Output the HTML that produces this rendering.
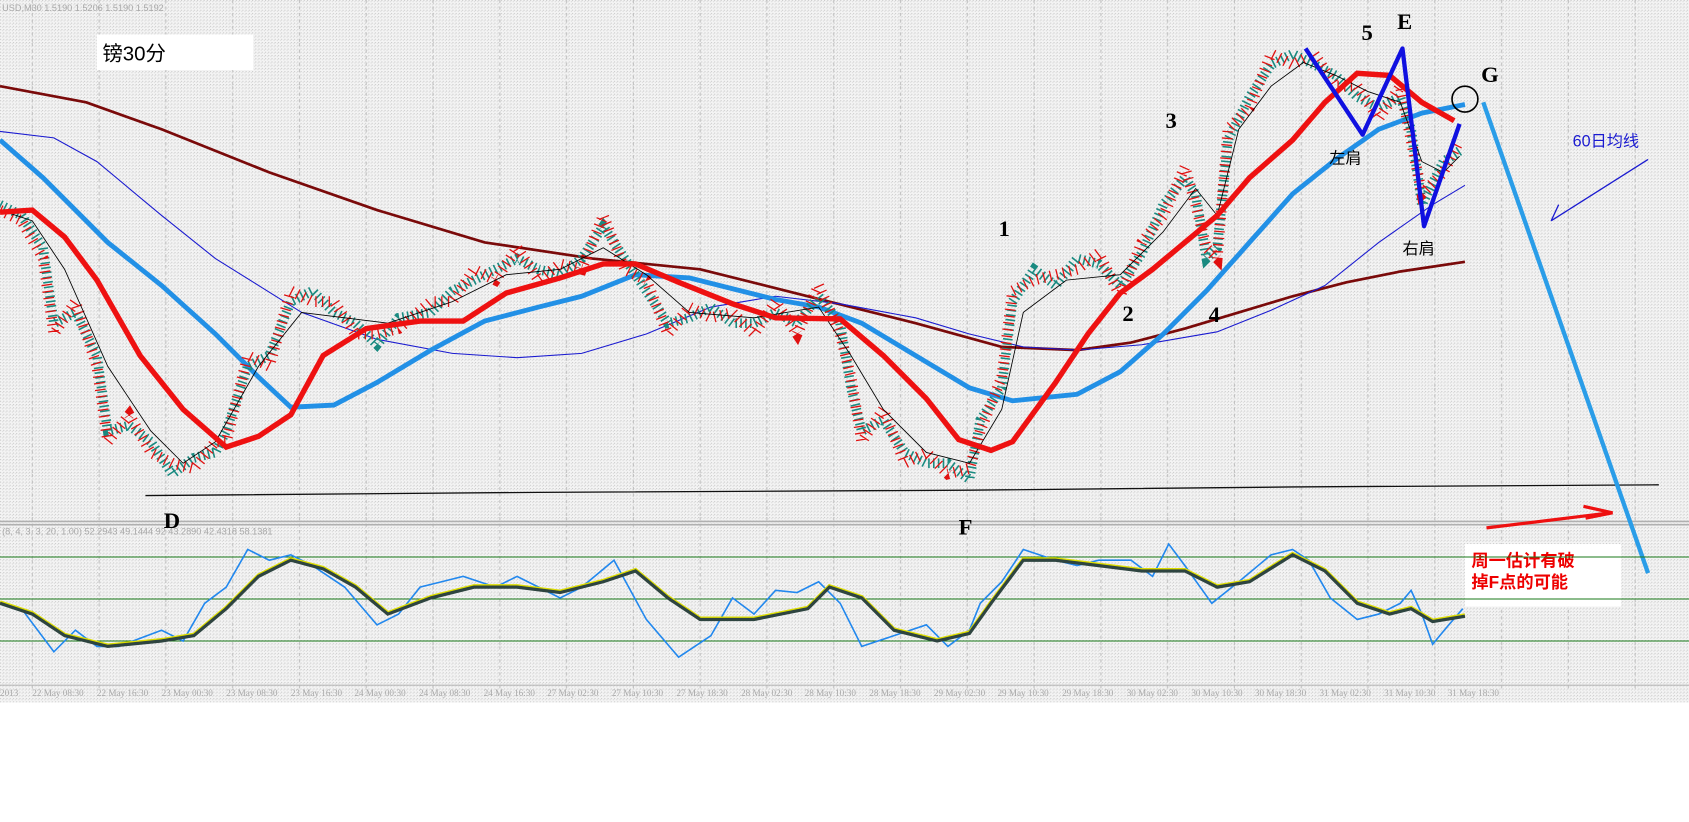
<!DOCTYPE html>
<html><head><meta charset="utf-8"><style>
html,body{margin:0;padding:0;background:#fff;width:1689px;height:822px;overflow:hidden}
svg{display:block}
text{font-family:"Liberation Serif","Noto Serif CJK SC",serif}
.cj{font-family:"Liberation Sans","Noto Sans CJK SC",sans-serif}
.ax{font-family:"Liberation Sans",sans-serif;font-size:8.5px;fill:#a8a8a8}
</style></head><body>
<svg width="1689" height="822" viewBox="0 0 1568 763" preserveAspectRatio="none" xmlns="http://www.w3.org/2000/svg">
<defs>
<pattern id="dots" width="3" height="3" patternUnits="userSpaceOnUse"><rect width="3" height="3" fill="#f4f4f4"/><rect width="1" height="1" fill="#c8c8c8"/><rect x="2" y="1" width="1" height="1" fill="#d8d8d8"/></pattern>
<pattern id="grid" width="62" height="40" patternUnits="userSpaceOnUse"><line x1="30" y1="0" x2="30" y2="40" stroke="#c0c0c0" stroke-dasharray="3,3"/></pattern>
</defs>
<rect x="0" y="0" width="1568" height="652" fill="url(#dots)"/>
<rect x="0" y="0" width="1568" height="640" fill="url(#grid)"/>
<line x1="0" y1="484" x2="1568" y2="484" stroke="#b0b0b0" stroke-width="1.5"/>
<line x1="0" y1="487" x2="1568" y2="487" stroke="#b0b0b0" stroke-width="1.5"/>
<line x1="0" y1="636" x2="1568" y2="636" stroke="#b8b8b8"/>
<text x="2" y="10" class="ax" font-size="8px">USD,M30  1.5190 1.5206 1.5190 1.5192</text>
<rect x="90" y="32" width="145" height="33" fill="#fff"/>
<text x="95" y="56" font-size="19" class="cj" fill="#000">镑30分</text>

<polyline fill="none" stroke="#7a0a0a" stroke-width="2.5" points="0,80 80,95 150,120 250,160 350,195 450,225 550,240 650,250 750,275 850,300 930,322 1000,325 1050,318 1100,305 1150,290 1200,275 1250,262 1300,252 1360,243"/>
<polyline fill="none" stroke="#1a1ad0" stroke-width="1" points="0,122 50,128 90,150 150,200 200,240 280,290 350,315 420,328 480,332 540,328 600,310 660,285 720,275 780,282 850,295 900,310 950,322 1000,325 1060,320 1130,308 1180,288 1230,265 1280,225 1330,190 1360,172"/>
<polyline fill="none" stroke="#2290e6" stroke-width="4.5" points="0,130 40,165 100,225 150,265 200,310 240,350 270,378 310,376 350,355 400,325 450,298 500,285 540,275 590,255 640,258 680,268 720,278 760,285 800,300 850,330 900,360 940,372 1000,366 1040,345 1080,310 1120,270 1160,225 1200,180 1240,148 1280,120 1320,105 1360,97"/>
<polyline fill="none" stroke="#1a8a80" stroke-width="9" stroke-dasharray="1.5,3" points="0,190 20,200 40,230 50,300 70,290 90,330 100,400 120,395 140,410 160,440 180,425 200,420 210,400 230,340 250,330 270,280 290,270 310,290 330,300 350,320 370,295 400,290 420,270 440,260 460,250 480,240 500,250 520,255 540,240 560,210 580,240 600,270 620,300 640,295 660,285 680,300 700,300 720,290 740,300 760,275 780,300 790,360 800,400 820,390 840,420 860,430 880,430 900,445 910,390 930,360 940,280 960,250 980,265 1000,240 1020,245 1040,265 1060,235 1080,190 1100,165 1110,180 1120,240 1130,230 1140,130 1160,90 1180,60 1200,50 1220,60 1240,70 1260,90 1280,100 1300,90 1310,120 1320,190 1340,150 1355,140"/>
<polyline fill="none" stroke="#e01010" stroke-width="10" stroke-dasharray="1.2,5" points="0,195 20,205 40,240 50,310 70,280 90,340 100,410 120,385 140,420 160,430 180,435 200,410 210,410 230,330 250,340 270,270 290,280 310,280 330,310 350,310 370,305 400,280 420,280 440,250 460,260 480,230 500,260 520,245 540,250 560,200 580,250 600,260 620,310 640,285 660,295 680,290 700,310 720,280 740,310 760,265 780,310 790,350 800,410 820,380 840,430 860,420 880,440 900,435 910,400 930,350 940,270 960,260 980,255 1000,250 1020,235 1040,275 1060,225 1080,200 1100,155 1110,190 1120,230 1130,240 1140,120 1160,100 1180,50 1200,60 1220,50 1240,80 1260,80 1280,110 1300,80 1310,130 1320,180 1340,160 1355,130"/>
<polyline fill="none" stroke="#000" stroke-width="0.8" points="0,195 30,205 60,250 100,340 140,400 170,430 200,410 240,340 280,290 320,295 360,300 420,280 470,255 520,250 560,230 600,255 640,290 700,295 760,285 790,330 820,380 860,420 900,430 930,380 950,290 990,260 1040,255 1080,215 1110,175 1130,200 1150,120 1180,80 1210,58 1240,70 1270,85 1300,95 1320,150 1340,160 1355,145"/>
<polyline fill="none" stroke="#ee1111" stroke-width="5" points="0,197 30,195 60,220 90,260 130,330 170,380 210,415 240,405 270,385 300,330 340,305 390,298 430,298 470,272 520,258 560,245 590,245 630,262 680,282 720,295 780,296 820,330 860,370 890,408 920,418 940,410 980,355 1010,310 1040,272 1070,250 1100,225 1130,200 1160,165 1200,130 1230,95 1260,68 1290,70 1320,95 1350,112"/>
<polyline fill="none" stroke="#111" stroke-width="1.2" points="135,460 500,457 900,455 1200,452 1540,450"/>

<polyline fill="none" stroke="#1010e0" stroke-width="4" stroke-linejoin="round" points="1212,45 1265,125 1302,45 1322,210 1355,115"/>
<circle cx="1360" cy="92" r="12" fill="none" stroke="#000" stroke-width="1.5"/>
<line x1="1377" y1="95" x2="1530" y2="532" stroke="#2a9de8" stroke-width="4"/>
<line x1="1380" y1="490" x2="1495" y2="476" stroke="#ee1010" stroke-width="3"/>
<polyline fill="none" stroke="#ee1010" stroke-width="3" points="1470,470 1497,476 1472,481"/>
<line x1="1530" y1="148" x2="1440" y2="205" stroke="#1a1ad0" stroke-width="1.2"/>
<line x1="1440" y1="205" x2="1447" y2="190" stroke="#1a1ad0" stroke-width="1.2"/>

<g font-size="21" fill="#000" font-weight="bold">
<text x="927" y="219">1</text><text x="1042" y="298">2</text><text x="1082" y="119">3</text>
<text x="1122" y="299">4</text><text x="1264" y="37">5</text><text x="1297" y="27">E</text>
<text x="1375" y="76">G</text><text x="152" y="490">D</text><text x="890" y="496">F</text>
</g>
<text x="1234" y="152" font-size="15" class="cj">左肩</text>
<text x="1302" y="236" font-size="15" class="cj">右肩</text>
<text x="1460" y="136" font-size="15" class="cj" fill="#1a1ad0">60日均线</text>
<rect x="1360" y="505" width="145" height="58" fill="#fff"/>
<text x="1366" y="526" font-size="16" class="cj" fill="#e00" font-weight="bold">周一估计有破</text>
<text x="1366" y="546" font-size="16" class="cj" fill="#e00" font-weight="bold">掉F点的可能</text>

<text x="2" y="496" class="ax">(8, 4, 3, 3, 20, 1.00) 52.2943 49.1444    92 43.2890 42.4318 58.1381</text>
<g stroke="#1a7a1a" stroke-width="1"><line x1="0" y1="517" x2="1568" y2="517"/><line x1="0" y1="556" x2="1568" y2="556"/><line x1="0" y1="595" x2="1568" y2="595"/></g>
<polyline fill="none" stroke="#2288ee" stroke-width="1.5" points="0,560 20,565 50,605 70,585 90,600 110,600 150,585 170,595 190,560 210,545 230,510 250,520 270,515 290,525 320,545 350,580 370,570 390,545 410,540 430,535 460,545 480,535 500,545 520,555 540,545 570,520 600,575 630,610 660,590 680,555 700,570 720,548 740,550 760,540 780,560 800,600 830,590 860,580 880,600 900,585 910,560 930,540 950,510 980,520 1000,525 1020,520 1050,520 1070,535 1085,505 1100,525 1125,560 1150,540 1180,515 1200,510 1215,520 1235,555 1260,575 1280,570 1300,560 1310,548 1320,570 1330,598 1345,580 1358,565"/>
<polyline fill="none" stroke="#dddd00" stroke-width="3.5" points="0,559 30,569 60,589 100,599 150,594 180,589 210,564 240,534 270,519 300,527 330,544 360,569 400,554 440,544 480,544 520,549 560,539 590,529 620,554 650,574 700,574 750,564 770,544 800,554 830,584 870,594 900,587 920,559 950,519 980,519 1020,524 1060,529 1100,529 1130,544 1160,539 1200,514 1230,529 1260,559 1290,569 1310,564 1330,576 1360,571"/>
<polyline fill="none" stroke="#2e4440" stroke-width="3" points="0,560 30,570 60,590 100,600 150,595 180,590 210,565 240,535 270,520 300,528 330,545 360,570 400,555 440,545 480,545 520,550 560,540 590,530 620,555 650,575 700,575 750,565 770,545 800,555 830,585 870,595 900,588 920,560 950,520 980,520 1020,525 1060,530 1100,530 1130,545 1160,540 1200,515 1230,530 1260,560 1290,570 1310,565 1330,577 1360,572"/>

<g class="ax">
<text x="0" y="646">2013</text>
<text x="30" y="646">22 May 08:30</text><text x="90" y="646">22 May 16:30</text><text x="150" y="646">23 May 00:30</text>
<text x="210" y="646">23 May 08:30</text><text x="270" y="646">23 May 16:30</text><text x="329" y="646">24 May 00:30</text>
<text x="389" y="646">24 May 08:30</text><text x="449" y="646">24 May 16:30</text><text x="508" y="646">27 May 02:30</text>
<text x="568" y="646">27 May 10:30</text><text x="628" y="646">27 May 18:30</text><text x="688" y="646">28 May 02:30</text>
<text x="747" y="646">28 May 10:30</text><text x="807" y="646">28 May 18:30</text><text x="867" y="646">29 May 02:30</text>
<text x="926" y="646">29 May 10:30</text><text x="986" y="646">29 May 18:30</text><text x="1046" y="646">30 May 02:30</text>
<text x="1106" y="646">30 May 10:30</text><text x="1165" y="646">30 May 18:30</text><text x="1225" y="646">31 May 02:30</text>
<text x="1285" y="646">31 May 10:30</text><text x="1344" y="646">31 May 18:30</text>
</g>
</svg>
</body></html>
